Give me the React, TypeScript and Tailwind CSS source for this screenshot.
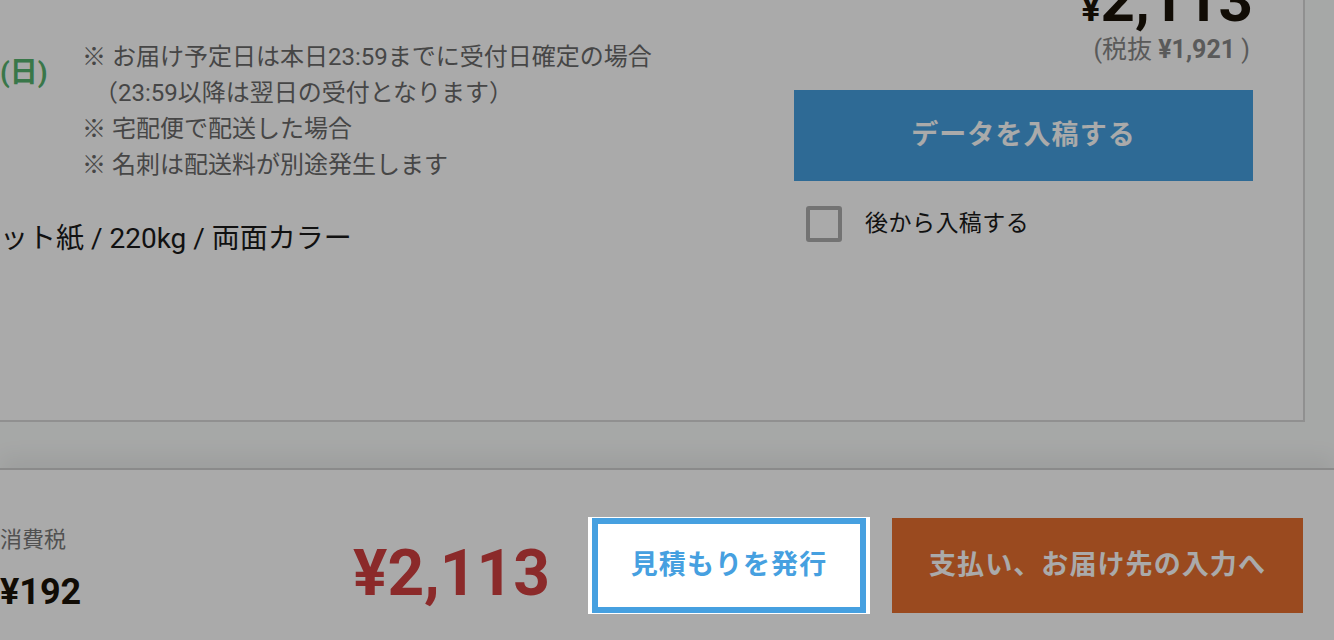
const font = "font-['Roboto','Noto_Sans_CJK_JP',sans-serif]"

function Notes() {
  const lines = [
    '※ お届け予定日は本日23:59までに受付日確定の場合',
    '\u3000（23:59以降は翌日の受付となります）',
    '※ 宅配便で配送した場合',
    '※ 名刺は配送料が別途発生します',
  ]
  return (
    <div className="text-[24px] leading-[36px] text-[#6a6a6a]">
      {lines.map((l) => (
        <p key={l} className="whitespace-nowrap">
          {l}
        </p>
      ))}
    </div>
  )
}

export default function App() {
  return (
    <div className={`relative w-[1334px] h-[640px] overflow-hidden bg-[#fafcfb] flex flex-col ${font}`}>
      {/* order card */}
      <div className="w-[1305px] h-[462px] -mt-[40px] shrink-0 bg-white border-r-2 border-b-2 border-[#d9d9d9] flex">
        <div className="flex-1 pt-[79px]">
          <div className="flex">
            <span className="w-[82px] mt-[16px] text-[28px] leading-[36px] font-bold text-[#56b36e]">(日)</span>
            <Notes />
          </div>
          <p className="mt-[38px] text-[28px] leading-[36px] text-[#1a1a1a] whitespace-nowrap">
            ット紙 / 220kg / 両面カラー
          </p>
        </div>

        <div className="w-[459px] mr-[50px] pt-[13px] flex flex-col">
          <p className="text-right h-[56px] leading-[56px] font-bold text-[#1a1208] whitespace-nowrap">
            <span className="text-[36px]">¥</span>
            <span className="text-[60px]">2,113</span>
          </p>
          <p className="mt-[6px] text-right text-[25px] leading-[30px] text-[#878787] pr-[3px]">
            (税抜 <span className="font-bold">¥1,921</span> )
          </p>
          <button className="mt-[25px] h-[91px] w-full bg-[#46a0e0] text-white text-[27px] font-bold tracking-[0.04em]">
            データを入稿する
          </button>
          <label className="mt-[25px] ml-[12px] flex items-center gap-[23px]">
            <span className="w-[36px] h-[36px] border-[4px] border-[#adadad] rounded-[3px] bg-white" />
            <span className="text-[23px] text-[#1a1a1a] tracking-[0.02em]">後から入稿する</span>
          </label>
        </div>
      </div>

      {/* footer bar */}
      <div className="mt-auto h-[172px] pt-[21px] bg-white border-t-2 border-[#cfcfcf] shadow-[0_-12px_20px_rgba(0,0,0,0.06)] flex items-center pr-[31px]">
        <div className="mt-[7px] flex flex-col">
          <span className="text-[22px] leading-[30px] text-[#7a7a7a]">消費税</span>
          <span className="mt-[16px] text-[36px] leading-[42px] font-bold text-[#1a1208]">¥192</span>
        </div>
        <span className="ml-auto mt-[17px] text-[64px] leading-[64px] font-bold text-[#d13f3f]">¥2,113</span>
        <div className="ml-[38px] w-[282px] shrink-0" />
        <button className="ml-[22px] w-[411px] h-[95px] bg-[#e76f2f] text-white text-[27px] font-bold tracking-[0.04em]">
          支払い、お届け先の入力へ
        </button>
      </div>

      {/* dim overlay */}
      <div className="absolute inset-0 bg-black/[0.333]" />

      {/* highlighted element above the overlay */}
      <div className="absolute left-[588px] top-[517px] bg-white px-[4px] py-[1px]">
        <button className="w-[274px] h-[95px] border-[6px] border-[#46a0e0] bg-white text-[#46a0e0] text-[27px] font-bold tracking-[0.04em]">
          見積もりを発行
        </button>
      </div>
    </div>
  )
}
